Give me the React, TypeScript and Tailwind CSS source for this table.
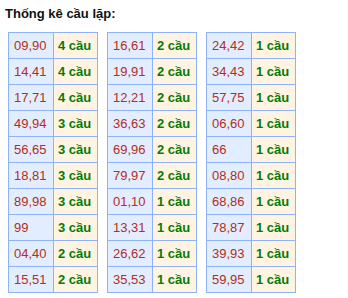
const tables: [string, number][][] = [
  [
    ["09,90", 4], ["14,41", 4], ["17,71", 4], ["49,94", 3], ["56,65", 3],
    ["18,81", 3], ["89,98", 3], ["99", 3], ["04,40", 2], ["15,51", 2],
  ],
  [
    ["16,61", 2], ["19,91", 2], ["12,21", 2], ["36,63", 2], ["69,96", 2],
    ["79,97", 2], ["01,10", 1], ["13,31", 1], ["26,62", 1], ["35,53", 1],
  ],
  [
    ["24,42", 1], ["34,43", 1], ["57,75", 1], ["06,60", 1], ["66", 1],
    ["08,80", 1], ["68,86", 1], ["78,87", 1], ["39,93", 1], ["59,95", 1],
  ],
];

export default function App() {
  return (
    <div className="w-[348px] h-[298px] bg-white font-['Liberation_Sans',Arial,sans-serif] text-[13px]">
      <div className="pt-[6px] pl-[5px] leading-[16px] font-bold text-[#111]">Thống kê cầu lặp:</div>

      <div className="flex gap-[9px] pl-[8px] mt-[10px]">
        {tables.map((rows, t) => (
          <div key={t} className="border-l border-t border-[#8db2f5]">
            {rows.map(([pair, count]) => (
              <div key={pair} className="flex h-[26px] leading-[25px]">
                <div className="w-[45px] pl-[5px] border-r border-b border-[#8db2f5] bg-[#e2edff] text-[#b32d22]">
                  {pair}
                </div>
                <div className="w-[44px] pl-[4px] border-r border-b border-[#8db2f5] bg-[#fff4e1] font-bold text-[#067a06]">
                  {count} cầu
                </div>
              </div>
            ))}
          </div>
        ))}
      </div>
    </div>
  );
}
